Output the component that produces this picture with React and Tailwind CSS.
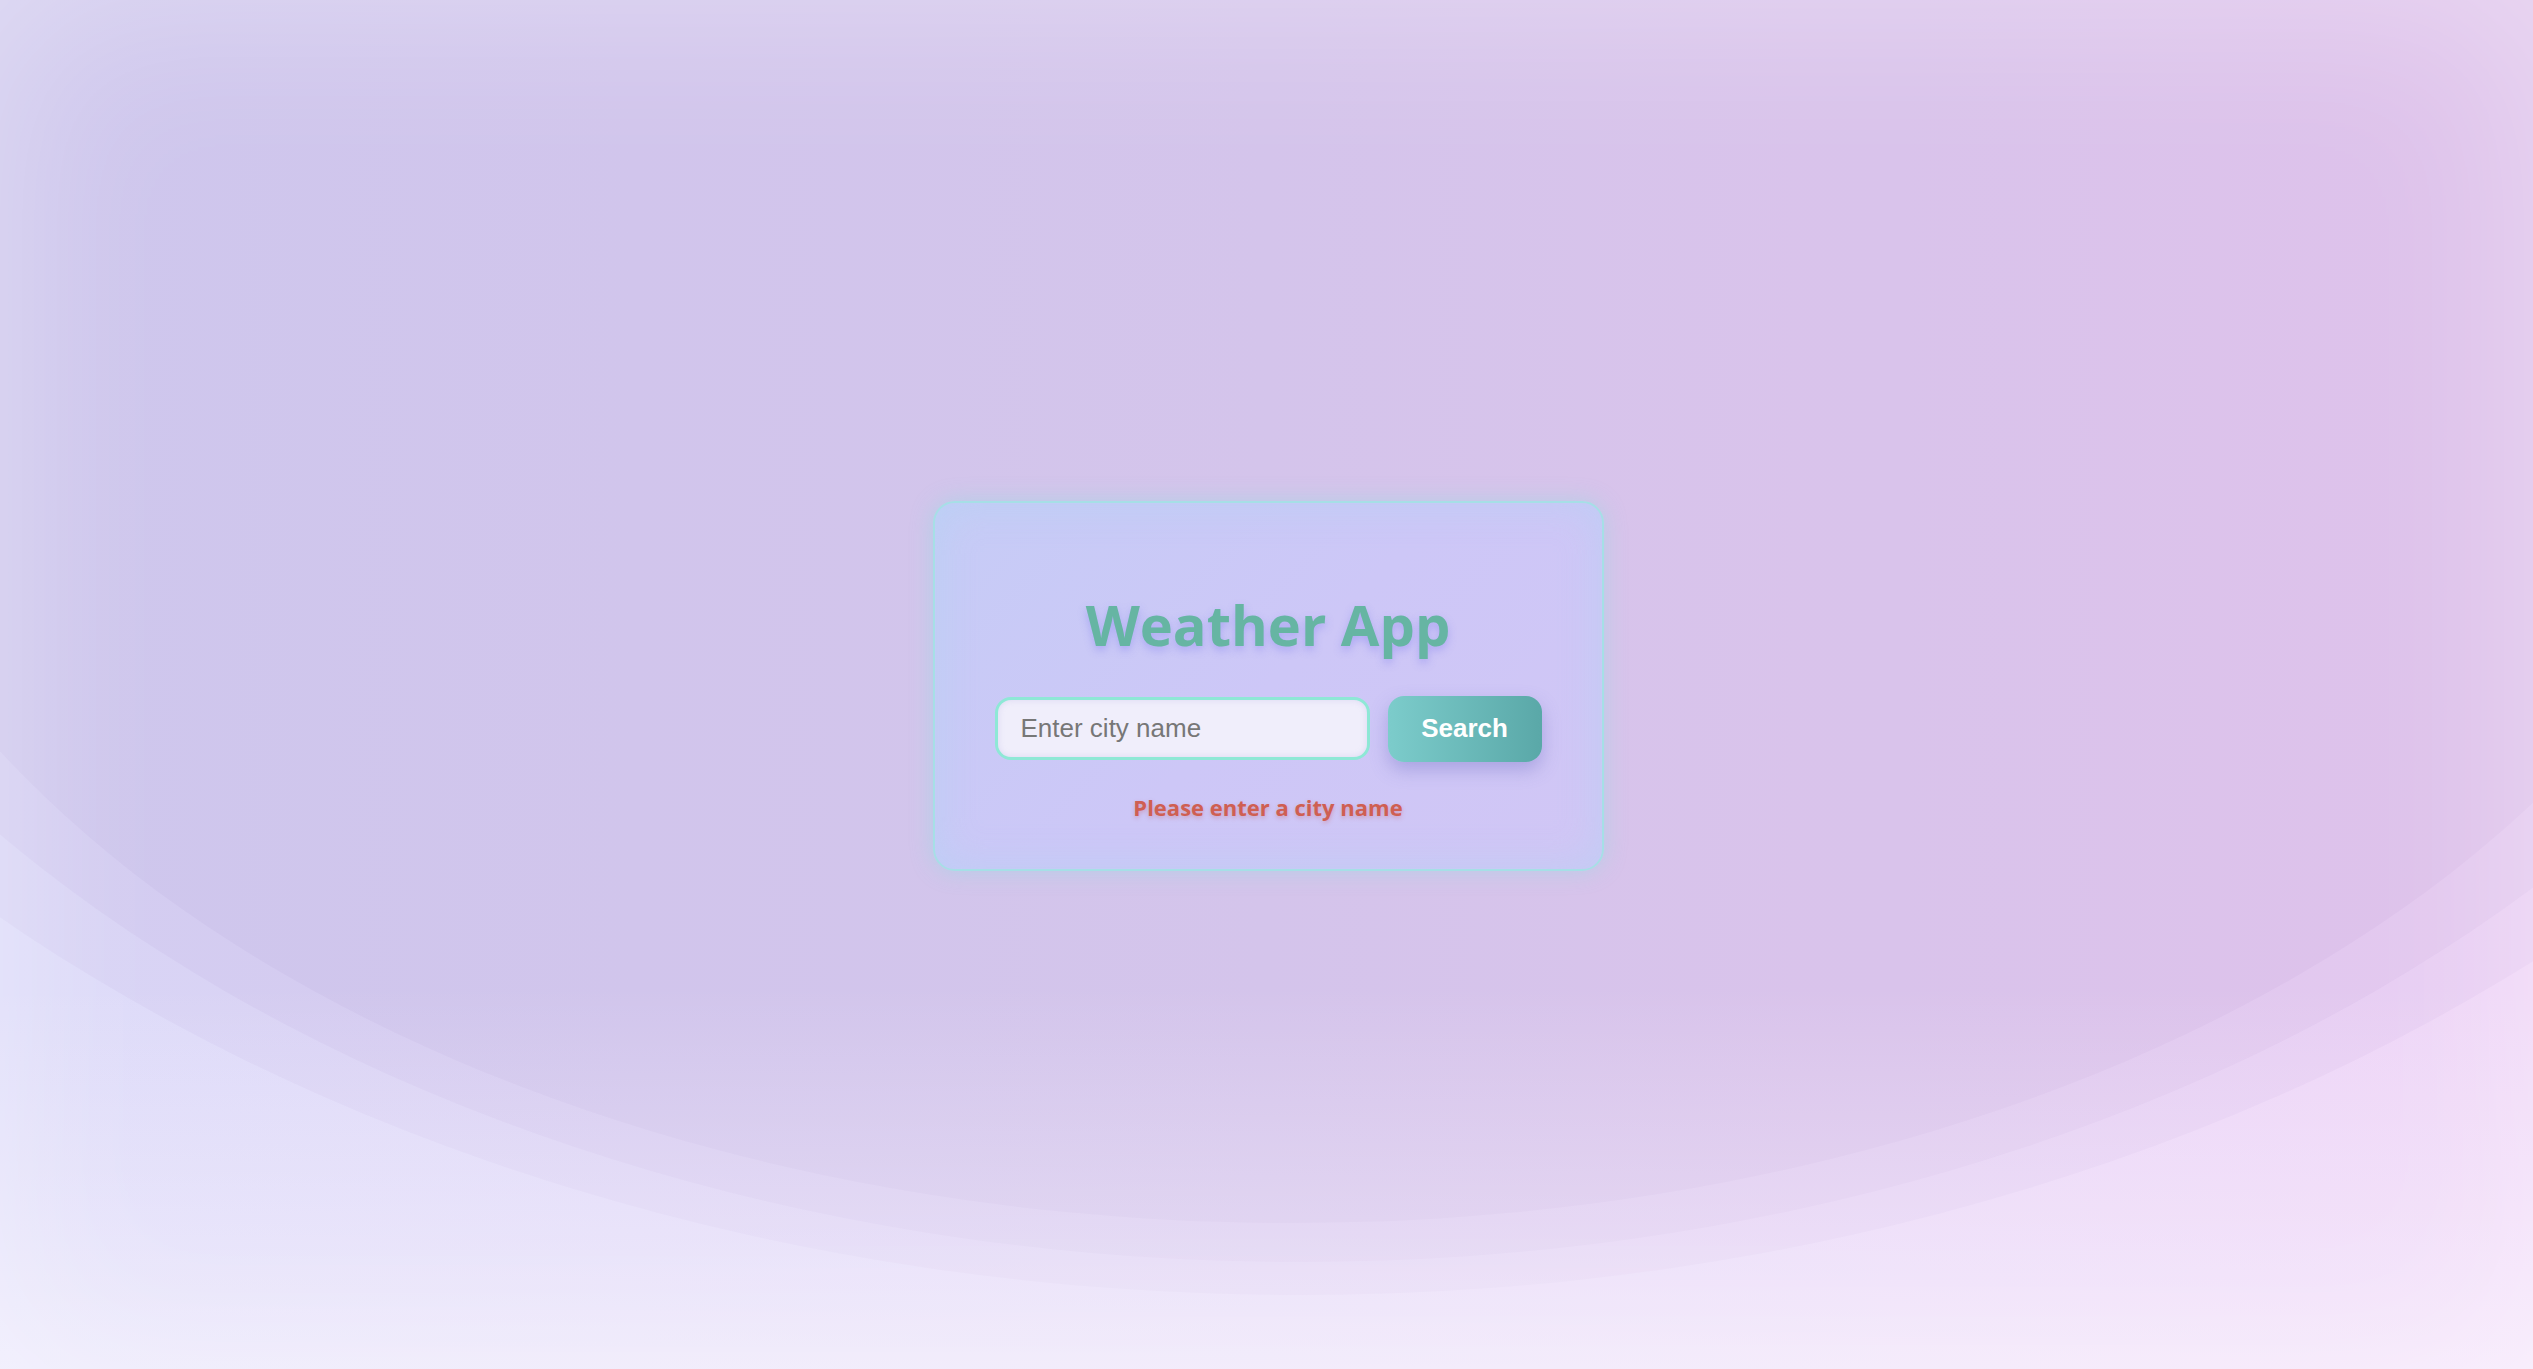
import { useState } from 'react';

// soft backdrop arcs, sized in px against the 2533x1369 canvas
const ARCS = [
  'left-[-600px] top-[-1495px] w-[3800px] h-[2790px]',
  'left-[-400px] top-[-1142px] w-[3400px] h-[2404px]',
  'left-[-208px] top-[-695px] w-[3000px] h-[1918px]',
];

export default function App() {
  const [city, setCity] = useState('');
  const [error, setError] = useState('Please enter a city name');

  const search = () => {
    if (!city.trim()) setError('Please enter a city name');
    else setError('');
  };

  return (
    <div className="relative min-h-screen w-full overflow-hidden flex items-center justify-center bg-[linear-gradient(90deg,#dddbf9_0%,#e3d7f7_50%,#efd5f7_100%)]">
      {/* backdrop */}
      {ARCS.map((cls, i) => (
        <div key={i} className={`pointer-events-none absolute rounded-[50%] bg-[rgba(110,80,170,0.045)] ${cls}`} />
      ))}
      <div className="pointer-events-none absolute inset-0 bg-[linear-gradient(180deg,transparent_72%,rgba(252,248,255,0.5)_100%)]" />
      <div className="pointer-events-none absolute inset-0 shadow-[inset_0_0_180px_rgba(255,255,255,0.4)]" />

      {/* card */}
      <div className="relative z-10 ml-[3px] mt-[3px] w-[671px] rounded-[22px] border-2 border-[#a6dfe6] bg-[linear-gradient(135deg,#c6ccf6_0%,#cdc7f7_50%,#d1c6f5_100%)] px-[60px] pt-[88px] pb-[45px] shadow-[0_0_22px_rgba(120,230,220,0.35),inset_0_0_40px_rgba(170,215,245,0.45)]">
        <h1 className="text-center font-['Open_Sans',sans-serif] text-[56px] font-bold leading-[1.2] text-[#66b5a3] [text-shadow:0_4px_8px_rgba(110,110,235,0.35)]">
          Weather App
        </h1>

        <div className="mt-[37px] flex items-center gap-[18px]">
          <input
            value={city}
            onChange={e => setCity(e.target.value)}
            placeholder="Enter city name"
            className="h-[63px] w-[375px] rounded-[16px] border-[3px] border-[#8ee8d6] bg-[#f0eefb] pl-[23px] pr-3 font-['Liberation_Sans',Arial,sans-serif] text-[26px] text-[#333] placeholder:text-[#777] outline-none shadow-[inset_0_0_6px_rgba(160,150,220,0.25)]"
          />
          <button
            onClick={search}
            className="h-[66px] w-[155px] rounded-[16px] bg-[linear-gradient(90deg,#7ccccb_0%,#5aa8a8_100%)] font-['Liberation_Sans',Arial,sans-serif] text-[26px] font-bold text-white shadow-[0_8px_18px_rgba(100,100,190,0.35)]"
          >
            Search
          </button>
        </div>

        {error && (
          <p className="mt-[29px] text-center font-['Open_Sans',sans-serif] text-[22px] font-bold leading-[1.5] text-[#cf5f52] [text-shadow:0_2px_4px_rgba(200,80,80,0.35)]">
            {error}
          </p>
        )}
      </div>
    </div>
  );
}
